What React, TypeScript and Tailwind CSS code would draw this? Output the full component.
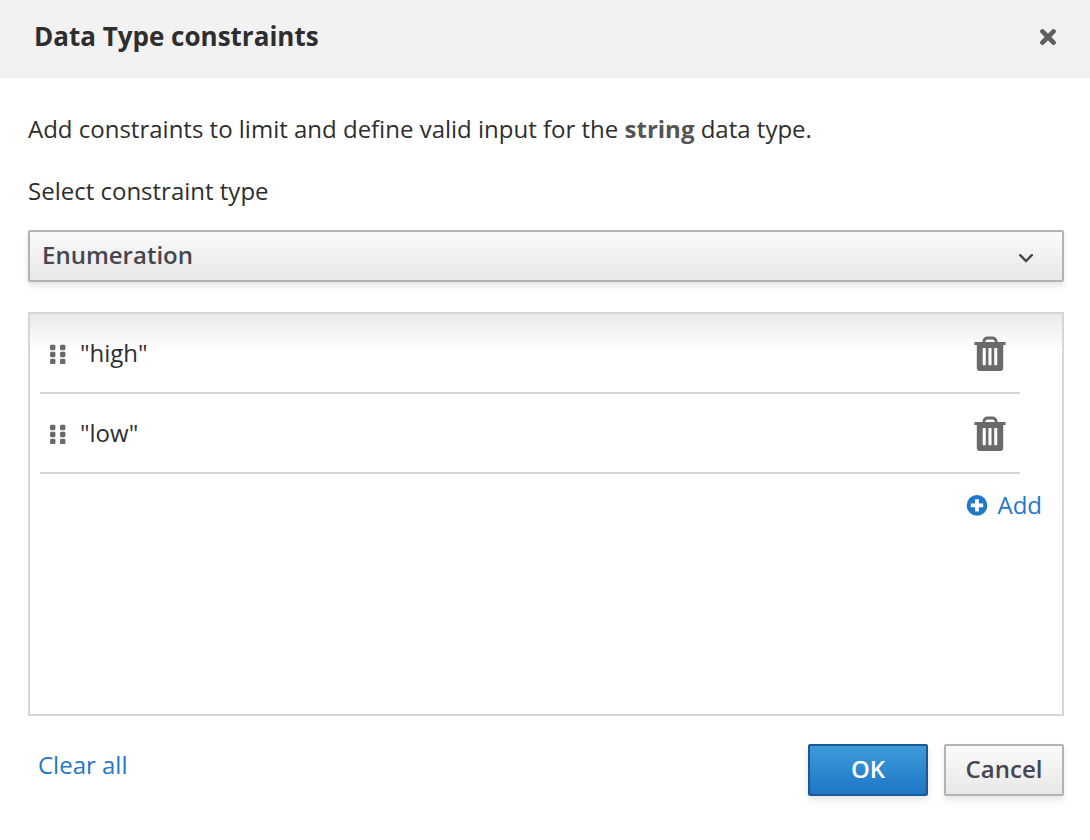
import { useState } from "react";

type Constraint = { id: number; value: string };

function CloseIcon() {
  return (
    <svg viewBox="0 0 20 20" className="size-5" aria-hidden="true">
      <path
        d="M4.400 4.400 15.600 15.600M15.600 4.400 4.400 15.600"
        fill="none"
        stroke="#5f5f5f"
        strokeWidth="4.600"
        strokeLinecap="round"
      />
      <path
        d="M4.600 4.600 15.400 15.400M15.400 4.600 4.600 15.400"
        fill="none"
        stroke="#5f5f5f"
        strokeWidth="3.600"
        strokeLinecap="square"
      />
    </svg>
  );
}

function GripIcon() {
  return (
    <svg viewBox="0 0 16 22" className="h-[22px] w-4" fill="#6a6a6a" aria-hidden="true">
      {[0, 10].map((x) =>
        [3, 10, 17].map((y) => <rect key={`${x}-${y}`} x={x} y={y - 0.2} width="5.4" height="5.4" rx="1.4" />)
      )}
    </svg>
  );
}

function TrashIcon() {
  return (
    <svg viewBox="0 0 32 38" className="h-[38px] w-8" aria-hidden="true">
      <path d="M9.800 9V7.500Q10.600 4 13.500 4h5Q21.400 4 22.200 7.500V9" fill="none" stroke="#6a6a6a" strokeWidth="2.8" />
      <path
        fill="#6a6a6a"
        fillRule="evenodd"
        d="M.4 8h31.200v2.900H29.200V34q0 3-3 3H5.800q-3 0-3-3V10.900H.4ZM9.500 14q-.8 0-.8.8v15.600q0 .8.8.8h1.500q.8 0 .8-.8V14.800q0-.8-.8-.8Zm5.750 0q-.8 0-.8.8v15.600q0 .8.8.8h1.500q.8 0 .8-.8V14.800q0-.8-.8-.8Zm5.750 0q-.8 0-.8.8v15.600q0 .8.8.8h1.500q.8 0 .8-.8V14.800q0-.8-.8-.8Z"
      />
    </svg>
  );
}

function AddIcon() {
  return (
    <svg viewBox="0 0 20 20" className="size-5 overflow-visible" aria-hidden="true">
      <circle cx="10" cy="10.400" r="10.300" fill="#1f78c8" />
      <path d="M10 6.100v8.600M5.700 10.400h8.600" fill="none" stroke="#fff" strokeWidth="3.800" strokeLinecap="square" />
    </svg>
  );
}

export default function App() {
  const [items, setItems] = useState<Constraint[]>([
    { id: 1, value: '"high"' },
    { id: 2, value: '"low"' },
  ]);

  return (
    <div
      role="dialog"
      aria-labelledby="dialog-title"
      className="min-h-screen bg-white font-['Open_Sans',sans-serif] text-2xl leading-10 text-[#2e2e2e]"
    >
      <header className="flex items-start justify-between bg-[#f2f2f2] pt-4 pr-8 pb-[22px] pl-[34px]">
        <h1 id="dialog-title" className="text-[26px] leading-10 font-bold">
          Data Type constraints
        </h1>
        <button type="button" aria-label="Close" className="mt-[11px] cursor-pointer">
          <CloseIcon />
        </button>
      </header>

      <main className="pt-[31px] pr-[26px] pl-7">
        <p>
          Add constraints to limit and define valid input for the <strong className="font-bold text-[#555]">string</strong>{" "}
          data type.
        </p>
        <label htmlFor="constraint-type" className="mt-[22px] block">
          Select constraint type
        </label>

        <div className="mt-[19px] grid items-center">
          <select
            id="constraint-type"
            defaultValue="Enumeration"
            className="col-start-1 row-start-1 h-[52px] w-full appearance-none rounded-[2px] border-2 border-[#b3b3b3] bg-linear-to-b from-[#fafafa] to-[#e8e8e8] pr-16 pb-[2px] pl-3 font-semibold text-[#46464f] shadow-[0_4px_6px_rgba(3,3,3,0.1)]"
          >
            <option>Enumeration</option>
            <option>Expression</option>
            <option>Range</option>
          </select>
          <svg
            viewBox="0 0 16 10"
            className="pointer-events-none col-start-1 row-start-1 mt-1 mr-[30px] h-[10px] w-4 justify-self-end"
            aria-hidden="true"
          >
            <path d="M2.200 2.200 8 8l5.800-5.800" fill="none" stroke="#46464f" strokeWidth="2.400" strokeLinecap="round" />
          </svg>
        </div>

        <section
          aria-label="Values"
          className="mt-[30px] min-h-[404px] border-2 border-[#d6d6d6] bg-linear-to-b from-[#e9e9e9] to-white to-[36px]"
        >
          <ul className="mr-[42px] ml-[10px]">
            {items.map((item) => (
              <li key={item.id} className="flex h-20 items-center border-b-2 border-[#d6d6d6] pr-[14px] pl-[10px]">
                <GripIcon />
                <span className="ml-[14px] flex-1">{item.value}</span>
                <button
                  type="button"
                  aria-label={`Remove ${item.value}`}
                  className="cursor-pointer"
                  onClick={() => setItems(items.filter(({ id }) => id !== item.id))}
                >
                  <TrashIcon />
                </button>
              </li>
            ))}
          </ul>
          <div className="flex justify-end pt-[11px] pr-5">
            <button
              type="button"
              className="flex cursor-pointer items-center gap-[10px] text-[#1f78c8]"
              onClick={() => setItems([...items, { id: Date.now(), value: '""' }])}
            >
              <AddIcon />
              Add
            </button>
          </div>
        </section>
      </main>

      <footer className="flex items-start gap-4 pt-7 pr-[26px] pb-11 pl-[38px]">
        <button type="button" className="mt-px mr-auto cursor-pointer text-[#1f78c8]" onClick={() => setItems([])}>
          Clear all
        </button>
        <button
          type="button"
          className="h-[52px] w-[120px] cursor-pointer rounded-[2px] border-2 border-[#195a94] bg-linear-to-b from-[#3d9bd8] to-[#1f76c6] pb-[2px] font-semibold text-white shadow-[0_4px_6px_rgba(3,3,3,0.1)]"
        >
          OK
        </button>
        <button
          type="button"
          className="h-[52px] w-[120px] cursor-pointer rounded-[2px] border-2 border-[#b3b3b3] bg-linear-to-b from-[#fafafa] to-[#e8e8e8] pb-[2px] font-semibold text-[#46464f] shadow-[0_4px_6px_rgba(3,3,3,0.1)]"
        >
          Cancel
        </button>
      </footer>
    </div>
  );
}
